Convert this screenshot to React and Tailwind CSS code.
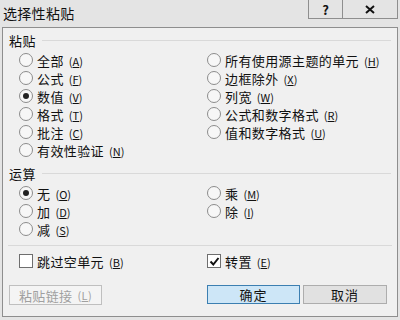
import React from "react";

const font = { fontFamily: '"Noto Sans CJK SC", "Liberation Sans", sans-serif' };

function Acc({ k }) {
  return (
    <span className="ml-[5px] text-[11px] tracking-normal">
      (<span className="underline">{k}</span>)
    </span>
  );
}

function Radio({ label, k, checked }) {
  return (
    <div className="flex h-[18px] items-center">
      <span className="flex h-[14px] w-[14px] items-center justify-center rounded-full border border-[#8c8c8c] bg-[#f7f7f7]">
        {checked && <span className="h-[6px] w-[6px] rounded-full bg-[#222]" />}
      </span>
      <span className="ml-[4px] text-[13px] leading-none tracking-[0.4px] text-[#111]">
        {label}
        <Acc k={k} />
      </span>
    </div>
  );
}

function Check({ label, k, checked }) {
  return (
    <div className="flex h-[18px] items-center">
      <span className="flex h-[14px] w-[14px] items-center justify-center border border-[#6e6e6e] bg-white">
        {checked && (
          <svg width="11" height="11" viewBox="0 0 11 11">
            <path d="M1.5 5.5 L4.3 8.5 L9.5 2" stroke="#111" strokeWidth="2" fill="none" />
          </svg>
        )}
      </span>
      <span className="ml-[4px] text-[13px] leading-none tracking-[0.4px] text-[#111]">
        {label}
        <Acc k={k} />
      </span>
    </div>
  );
}

function GroupLabel({ text }) {
  return (
    <div className="flex h-[16px] items-center pl-[6px] pr-[6px]">
      <span className="text-[13px] leading-none tracking-[0.4px] text-[#111]">{text}</span>
      <div className="ml-[6px] h-px flex-1 bg-[#d9d9d9]" />
    </div>
  );
}

export default function App() {
  return (
    <div className="h-[320px] w-[400px] overflow-hidden bg-[#e4e4e4]" style={font}>
      {/* title bar */}
      <div className="flex h-[27px] items-start">
        <div className="pl-[3px] pt-[6px] text-[14px] leading-none tracking-[0.3px] text-[#111]">选择性粘贴</div>
        <div className="ml-auto flex">
          <div className="flex h-[19px] w-[34px] items-center justify-center border-b border-l border-[#8e8e8e] text-[13px] font-bold leading-none text-[#111]">
            ?
          </div>
          <div className="mr-[2px] flex h-[19px] w-[56px] items-center justify-center border-b border-l border-r border-[#8e8e8e] text-[14px] font-bold leading-none text-[#111]">
            <svg width="10" height="9" viewBox="0 0 10 9">
              <path d="M1 1 L9 8 M9 1 L1 8" stroke="#111" strokeWidth="2" />
            </svg>
          </div>
        </div>
      </div>
      {/* body */}
      <div className="mx-[2px] h-[290px] border border-[#8e8e8e] bg-[#f0f0f0]">
        <div className="pt-[4px]">
          <GroupLabel text="粘贴" />
        </div>
        <div className="mt-[3px] flex pl-[16px]">
          <div className="w-[188px]">
            <Radio label="全部" k="A" />
            <Radio label="公式" k="F" />
            <Radio label="数值" k="V" checked />
            <Radio label="格式" k="T" />
            <Radio label="批注" k="C" />
            <Radio label="有效性验证" k="N" />
          </div>
          <div>
            <Radio label="所有使用源主题的单元" k="H" />
            <Radio label="边框除外" k="X" />
            <Radio label="列宽" k="W" />
            <Radio label="公式和数字格式" k="R" />
            <Radio label="值和数字格式" k="U" />
          </div>
        </div>
        <div className="mt-[6px]">
          <GroupLabel text="运算" />
        </div>
        <div className="mt-[3px] flex pl-[16px]">
          <div className="w-[188px]">
            <Radio label="无" k="O" checked />
            <Radio label="加" k="D" />
            <Radio label="减" k="S" />
          </div>
          <div>
            <Radio label="乘" k="M" />
            <Radio label="除" k="I" />
          </div>
        </div>
        <div className="mx-[5px] mt-[7px] h-px bg-[#d9d9d9]" />
        <div className="mt-[6px] flex pl-[16px]">
          <div className="w-[188px]">
            <Check label="跳过空单元" k="B" />
          </div>
          <Check label="转置" k="E" checked />
        </div>
        <div className="mt-[15px] flex items-start pl-[6px]">
          <div className="flex h-[20px] w-[93px] items-center justify-center border border-[#bfbfbf] bg-[#f4f4f4] text-[13px] leading-none tracking-[0.4px] text-[#a0a0a0]">
            粘贴链接
            <span className="ml-[5px] text-[11px]">
              (<span className="underline">L</span>)
            </span>
          </div>
          <div className="ml-[105px] flex h-[19px] w-[93px] items-center justify-center border border-[#3c7fb1] bg-[#cde6f7] text-[13px] leading-none tracking-[1px] text-[#111]">
            确定
          </div>
          <div className="ml-[3px] flex h-[19px] w-[84px] items-center justify-center border border-[#adadad] bg-[#e1e1e1] text-[13px] leading-none tracking-[1px] text-[#111]">
            取消
          </div>
        </div>
      </div>
    </div>
  );
}
